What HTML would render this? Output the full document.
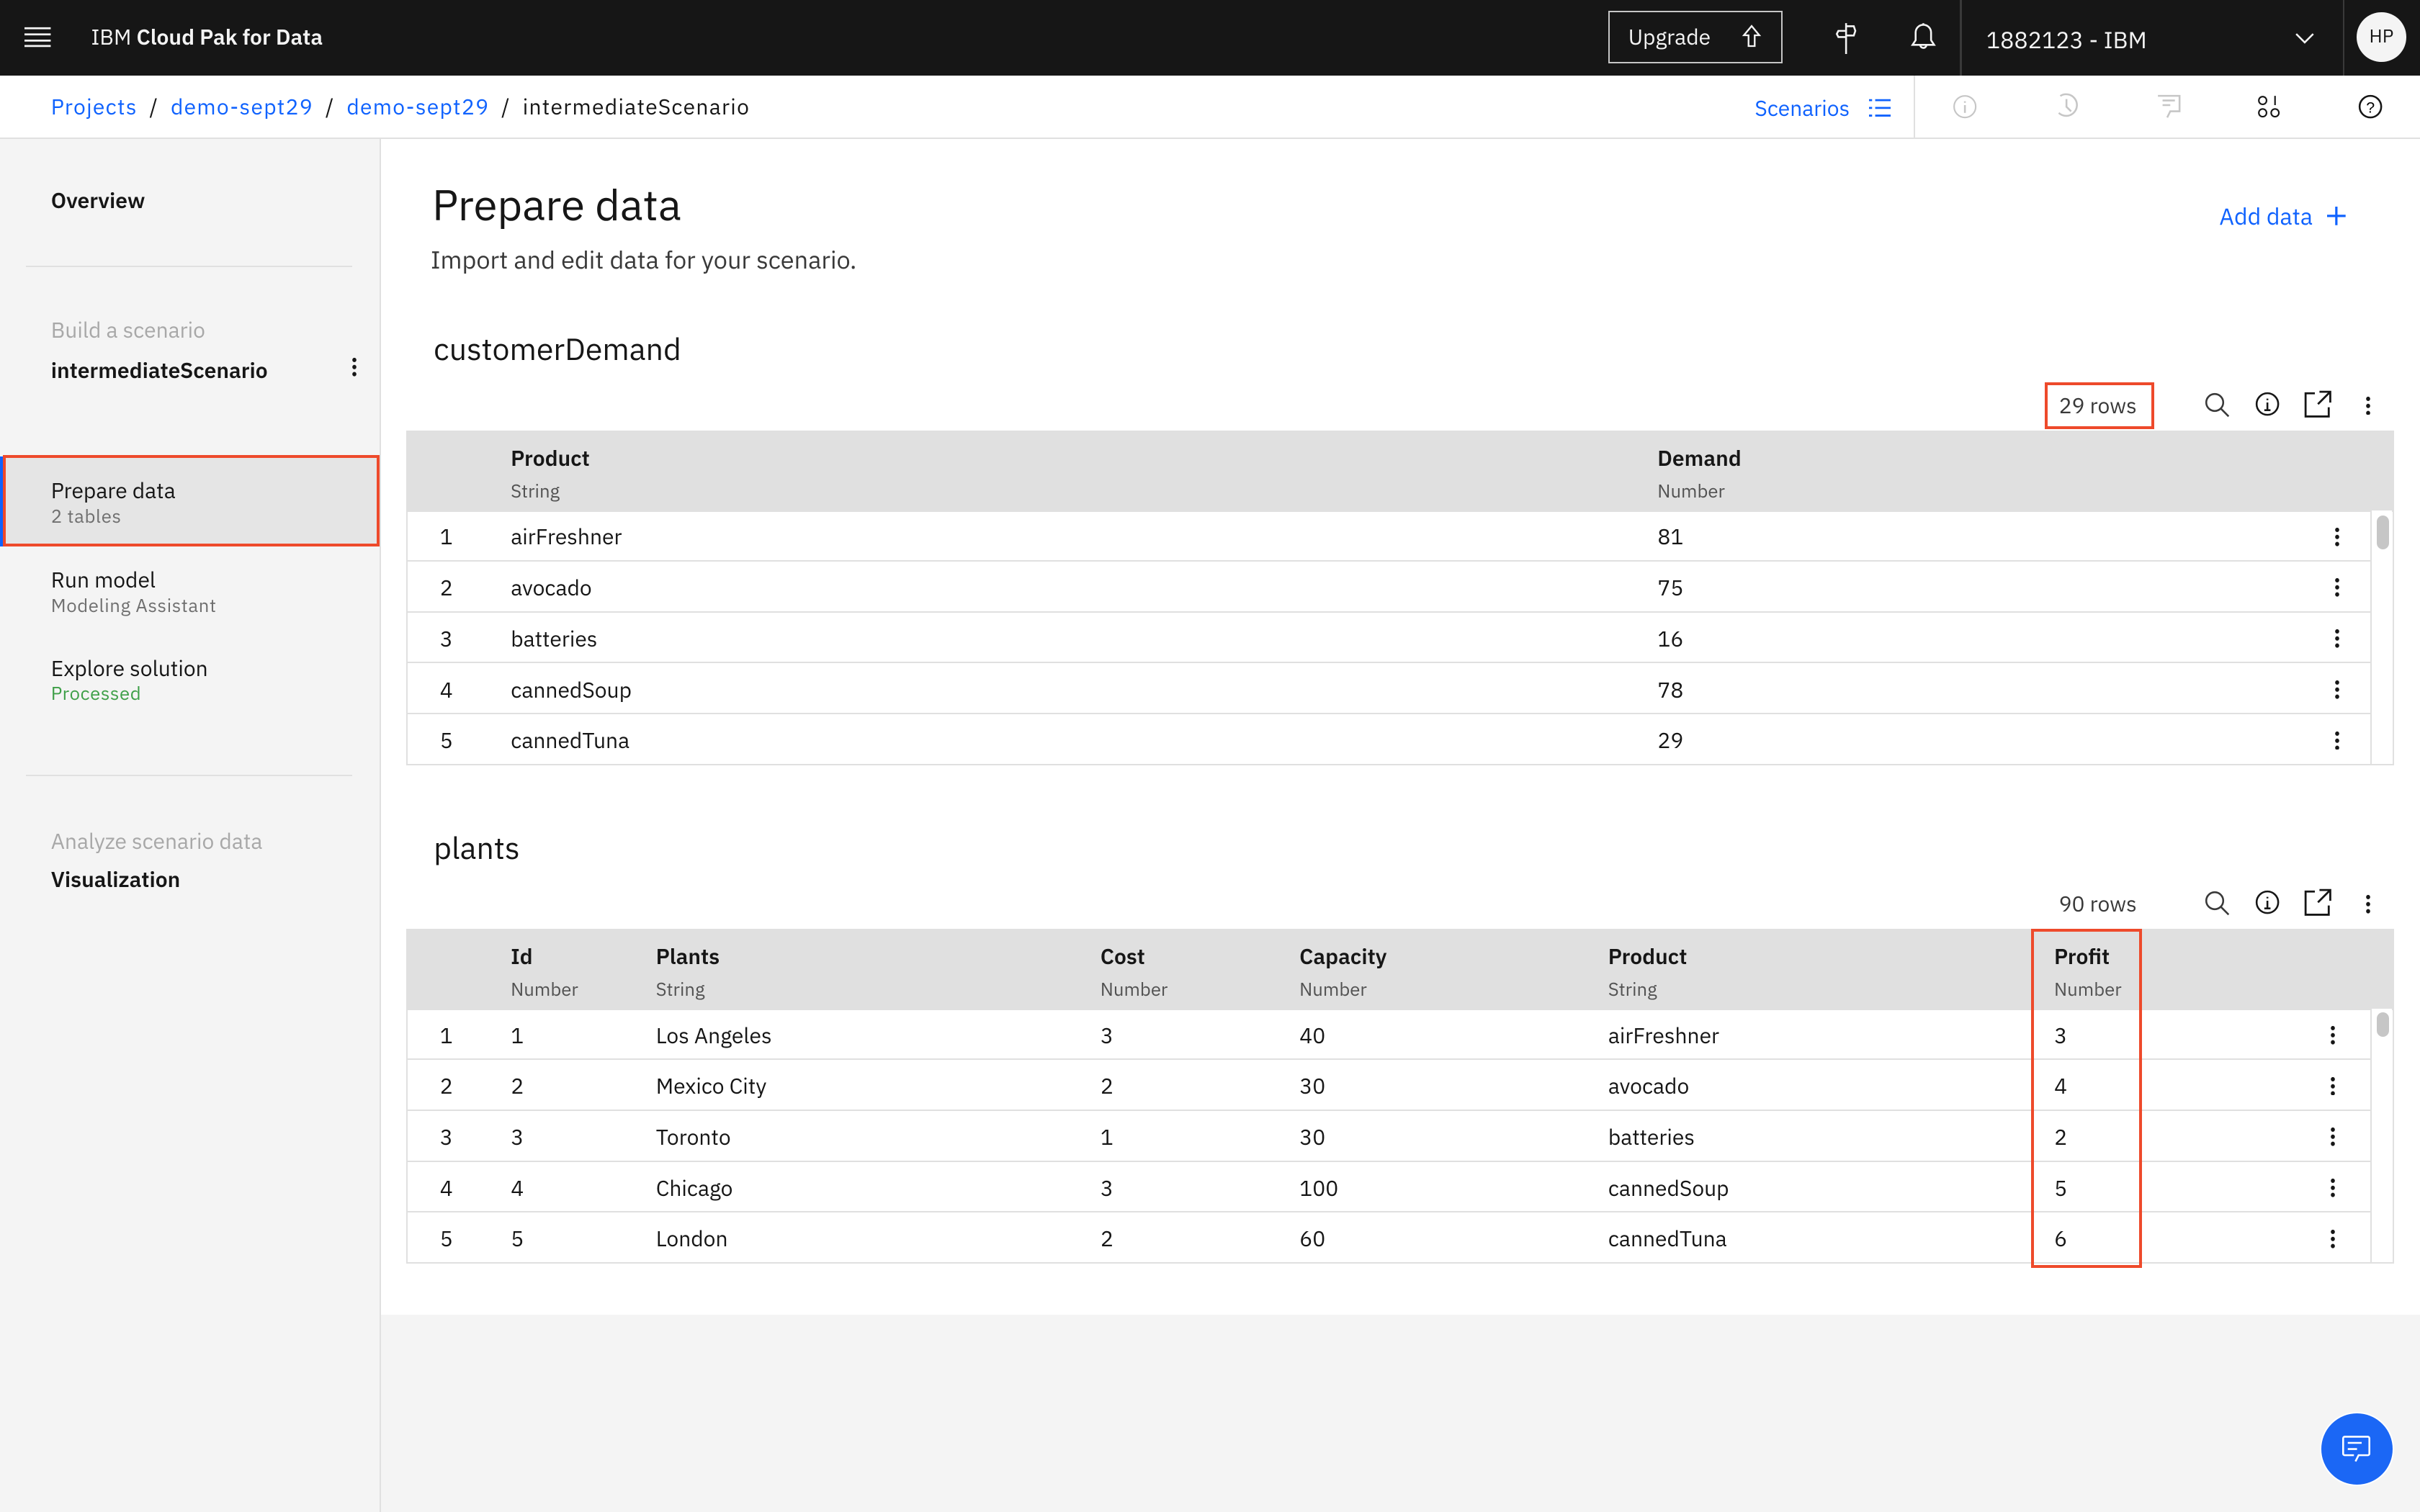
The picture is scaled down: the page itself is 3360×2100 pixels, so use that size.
<!DOCTYPE html>
<html><head><meta charset="utf-8"><style>
*{margin:0;padding:0;box-sizing:border-box}
html,body{width:3360px;height:2100px;overflow:hidden;background:#f4f4f4}
#r{zoom:2.142857;width:1568px;height:980px;position:relative;font-family:"IBM Plex Sans","Liberation Sans",sans-serif;color:#161616;background:#f4f4f4}
.a{position:absolute;white-space:nowrap}
.hdr{left:0;top:0;width:1568px;height:49px;background:#161616}
.w{color:#f4f4f4}
.bc{left:0;top:49px;width:1568px;height:41px;background:#fff;border-bottom:1px solid #e0e0e0}
.blue{color:#0f62fe}
.side{left:0;top:90px;width:247px;height:890px;background:#f4f4f4;border-right:1px solid #e0e0e0}
.main{left:247px;top:90px;width:1321px;height:762px;background:#fff}
.s14{font-size:14px}.s12{font-size:12px;color:#6f6f6f;letter-spacing:.3px}
.b{font-weight:600}
.tbl{left:263px;width:1288px;border:1px solid #e0e0e0;background:#fff}
.th{position:absolute;left:0;top:0;width:100%;height:52px;background:#e0e0e0}
.row{position:absolute;left:0;width:1272px;height:33px;border-bottom:1px solid #e0e0e0;font-size:14px}
.row span,.th span{position:absolute}
.th .n{top:8px;font-size:14px;font-weight:600}
.th .t{top:31px;font-size:12px;color:#525252}
.row span{top:8px}
.kb{position:absolute;width:3px;height:13px;top:10px;background:radial-gradient(circle,#161616 1.3px,transparent 1.5px) 0 0/3px 4.6px repeat-y}
</style></head><body><div id="r">
<div class="a hdr"></div>
<svg class="a" style="left:16px;top:17px" width="17" height="14"><path d="M0 1.5H17M0 5.5H17M0 9.5H17M0 13H17" stroke="#f4f4f4" stroke-width="1.3"/></svg>
<div class="a w s14" style="left:59px;top:15px">IBM <b style="font-weight:600">Cloud Pak for Data</b></div>
<div class="a" style="left:1042px;top:7px;width:113px;height:34px;border:1px solid #c6c6c6"></div>
<div class="a w s14" style="left:1055px;top:15px">Upgrade</div>
<svg class="a" style="left:1128px;top:16px" width="14" height="16"><path d="M7 1L2 7h3v7h4V7h3z" fill="none" stroke="#f4f4f4" stroke-width="1.1"/></svg>
<svg class="a" style="left:1188px;top:14px" width="16" height="22"><path d="M8 1V21M8 3h5l1 3-1 3H8M8 6H3L2 8l1 2h5" fill="none" stroke="#f4f4f4" stroke-width="1.2"/></svg>
<svg class="a" style="left:1236px;top:13px" width="20" height="22"><path d="M3 16h14l-2-3V8a5 5 0 0 0-10 0v5zM8 16a2 2 0 0 0 4 0M10 3V2" fill="none" stroke="#f4f4f4" stroke-width="1.2"/></svg>
<div class="a" style="left:1270px;top:0;width:1px;height:49px;background:#393939"></div>
<div class="a w" style="left:1287px;top:16px;font-size:15px">1882123 - IBM</div>
<svg class="a" style="left:1487px;top:21px" width="13" height="8"><path d="M1 1l5.5 5.5L12 1" fill="none" stroke="#f4f4f4" stroke-width="1.2"/></svg>
<div class="a" style="left:1518px;top:0;width:1px;height:49px;background:#393939"></div>
<div class="a" style="left:1527px;top:8px;width:32px;height:32px;border-radius:50%;background:#f4f4f4;font-size:12px;text-align:center;line-height:32px">HP</div>

<div class="a bc"></div>
<div class="a s14" style="left:33px;top:60px;letter-spacing:.6px"><span class="blue">Projects</span> &nbsp;/&nbsp;&nbsp;<span class="blue">demo-sept29</span>&nbsp; /&nbsp;&nbsp;<span class="blue">demo-sept29</span>&nbsp; /&nbsp;&nbsp;intermediateScenario</div>
<div class="a s14 blue" style="left:1137px;top:61px">Scenarios</div>
<svg class="a" style="left:1211px;top:64px" width="14" height="12"><path d="M0 1h2M4 1h10M0 6h2M4 6h10M0 11h2M4 11h10" stroke="#0f62fe" stroke-width="1.3"/></svg>
<div class="a" style="left:1240px;top:49px;width:1px;height:41px;background:#e0e0e0"></div>
<svg class="a" style="left:1265px;top:61px" width="16" height="16"><circle cx="8" cy="8" r="7" fill="none" stroke="#c6c6c6"/><path d="M8 7v5M8 4.5v1" stroke="#c6c6c6" stroke-width="1.2"/></svg>
<svg class="a" style="left:1331px;top:60px" width="16" height="17"><path d="M4 2A7 7 0 1 1 3 13M8 4v5l3 3" fill="none" stroke="#c6c6c6" stroke-width="1.2"/></svg>
<svg class="a" style="left:1397px;top:61px" width="16" height="17"><path d="M1 1h14v10H9l-2 4M4 4h8M4 7h5" fill="none" stroke="#c6c6c6" stroke-width="1.2"/></svg>
<svg class="a" style="left:1462px;top:61px" width="16" height="16" font-size="8"><circle cx="4" cy="4" r="2.5" fill="none" stroke="#161616"/><path d="M12 1v6" stroke="#161616"/><circle cx="4" cy="12" r="2.5" fill="none" stroke="#161616"/><circle cx="12" cy="12" r="2.5" fill="none" stroke="#161616"/></svg>
<svg class="a" style="left:1528px;top:61px" width="16" height="16"><circle cx="8" cy="8" r="7" fill="none" stroke="#161616" stroke-width="1.2"/><text x="8" y="12" font-size="10" text-anchor="middle" font-family="Liberation Sans">?</text></svg>

<div class="a side"></div>
<div class="a s14 b" style="left:33px;top:121px">Overview</div>
<div class="a" style="left:17px;top:172px;width:211px;height:1px;background:#e0e0e0"></div>
<div class="a s14" style="left:33px;top:205px;color:#a8a8a8">Build a scenario</div>
<div class="a s14 b" style="left:33px;top:231px">intermediateScenario</div>
<div class="a kb" style="left:228px;top:231px"></div>
<div class="a" style="left:0;top:296px;width:3px;height:58px;background:#0f62fe"></div>
<div class="a" style="left:2px;top:295px;width:244px;height:59px;background:#e5e5e5;border:2px solid #ee4a2b"></div>
<div class="a s14" style="left:33px;top:309px">Prepare data</div>
<div class="a s12" style="left:33px;top:327px">2 tables</div>
<div class="a s14" style="left:33px;top:367px">Run model</div>
<div class="a s12" style="left:33px;top:385px">Modeling Assistant</div>
<div class="a s14" style="left:33px;top:424px">Explore solution</div>
<div class="a s12" style="left:33px;top:442px;color:#3e9f48">Processed</div>
<div class="a" style="left:17px;top:502px;width:211px;height:1px;background:#e0e0e0"></div>
<div class="a s14" style="left:33px;top:536px;color:#a8a8a8">Analyze scenario data</div>
<div class="a s14 b" style="left:33px;top:561px">Visualization</div>

<div class="a main"></div>
<div class="a" style="left:280px;top:114px;font-size:28px">Prepare data</div>
<div class="a" style="left:279px;top:158px;font-size:16px;color:#393939">Import and edit data for your scenario.</div>
<div class="a blue" style="left:1438px;top:130px;font-size:15px">Add data</div>
<svg class="a" style="left:1508px;top:134px" width="12" height="12"><path d="M6 0v12M0 6h12" stroke="#0f62fe" stroke-width="1.5"/></svg>

<div class="a" style="left:281px;top:213px;font-size:20px">customerDemand</div>
<div class="a" style="left:1325px;top:248px;width:71px;height:30px;border:2px solid #ee4a2b"></div>
<div class="a s14" style="left:1334px;top:254px;color:#393939">29 rows</div>

<div class="a" style="left:281px;top:536px;font-size:20px">plants</div>
<div class="a s14" style="left:1334px;top:577px;color:#393939">90 rows</div>

<div class="a tbl" style="top:279px;height:217px"><div class="th"><span class="n" style="left:67px">Product</span><span class="t" style="left:67px">String</span><span class="n" style="left:810px">Demand</span><span class="t" style="left:810px">Number</span></div></div>
<div class="a" style="left:1536px;top:331px;width:14px;height:164px;border-left:1px solid #e0e0e0;background:#fff"></div>
<div class="a" style="left:1540px;top:334px;width:8px;height:22px;border-radius:4px;background:#c6c6c6"></div>

<div class="a tbl" style="top:602px;height:217px"><div class="th"><span class="n" style="left:67px">Id</span><span class="t" style="left:67px">Number</span><span class="n" style="left:161px">Plants</span><span class="t" style="left:161px">String</span><span class="n" style="left:449px">Cost</span><span class="t" style="left:449px">Number</span><span class="n" style="left:578px">Capacity</span><span class="t" style="left:578px">Number</span><span class="n" style="left:778px">Product</span><span class="t" style="left:778px">String</span><span class="n" style="left:1067px">Profit</span><span class="t" style="left:1067px">Number</span></div></div>
<div class="a" style="left:1536px;top:654px;width:14px;height:164px;border-left:1px solid #e0e0e0;background:#fff"></div>
<div class="a" style="left:1540px;top:656px;width:8px;height:16px;border-radius:4px;background:#c6c6c6"></div>

<div class="a" style="left:264px;top:331px">
<div class="row" style="top:0"><span style="left:21px">1</span><span style="left:67px">airFreshner</span><span style="left:810px">81</span><i class="kb" style="left:1249px"></i></div>
<div class="row" style="top:33px"><span style="left:21px">2</span><span style="left:67px">avocado</span><span style="left:810px">75</span><i class="kb" style="left:1249px"></i></div>
<div class="row" style="top:66px"><span style="left:21px">3</span><span style="left:67px">batteries</span><span style="left:810px">16</span><i class="kb" style="left:1249px"></i></div>
<div class="row" style="top:99px"><span style="left:21px">4</span><span style="left:67px">cannedSoup</span><span style="left:810px">78</span><i class="kb" style="left:1249px"></i></div>
<div class="row" style="top:132px;border-bottom:none"><span style="left:21px">5</span><span style="left:67px">cannedTuna</span><span style="left:810px">29</span><i class="kb" style="left:1249px"></i></div>
</div>
<div class="a" style="left:264px;top:654px">
<div class="row" style="top:0"><span style="left:21px">1</span><span style="left:67px">1</span><span style="left:161px">Los Angeles</span><span style="left:449px">3</span><span style="left:578px">40</span><span style="left:778px">airFreshner</span><span style="left:1067px">3</span><i class="kb" style="left:1246px"></i></div>
<div class="row" style="top:33px"><span style="left:21px">2</span><span style="left:67px">2</span><span style="left:161px">Mexico City</span><span style="left:449px">2</span><span style="left:578px">30</span><span style="left:778px">avocado</span><span style="left:1067px">4</span><i class="kb" style="left:1246px"></i></div>
<div class="row" style="top:66px"><span style="left:21px">3</span><span style="left:67px">3</span><span style="left:161px">Toronto</span><span style="left:449px">1</span><span style="left:578px">30</span><span style="left:778px">batteries</span><span style="left:1067px">2</span><i class="kb" style="left:1246px"></i></div>
<div class="row" style="top:99px"><span style="left:21px">4</span><span style="left:67px">4</span><span style="left:161px">Chicago</span><span style="left:449px">3</span><span style="left:578px">100</span><span style="left:778px">cannedSoup</span><span style="left:1067px">5</span><i class="kb" style="left:1246px"></i></div>
<div class="row" style="top:132px;border-bottom:none"><span style="left:21px">5</span><span style="left:67px">5</span><span style="left:161px">London</span><span style="left:449px">2</span><span style="left:578px">60</span><span style="left:778px">cannedTuna</span><span style="left:1067px">6</span><i class="kb" style="left:1246px"></i></div>
</div>
<div class="a" style="left:1316px;top:602px;width:72px;height:220px;border:2px solid #ee4a2b"></div>

<svg class="a" style="left:1428px;top:254px" width="17" height="17"><circle cx="7" cy="7" r="5.5" fill="none" stroke="#393939" stroke-width="1.2"/><path d="M11 11l5 5" stroke="#393939" stroke-width="1.2"/></svg>
<svg class="a" style="left:1461px;top:254px" width="16" height="16"><circle cx="8" cy="8" r="7" fill="none" stroke="#161616" stroke-width="1.2"/><path d="M8 7v5M6 12h4M8 4.5v1" stroke="#161616" stroke-width="1.2"/></svg>
<svg class="a" style="left:1493px;top:253px" width="18" height="18"><path d="M7 2H1v15h15v-6M10 1h7v7M17 1l-8 8" fill="none" stroke="#161616" stroke-width="1.3"/></svg>
<div class="a kb" style="left:1533px;top:256px"></div>
<svg class="a" style="left:1428px;top:577px" width="17" height="17"><circle cx="7" cy="7" r="5.5" fill="none" stroke="#393939" stroke-width="1.2"/><path d="M11 11l5 5" stroke="#393939" stroke-width="1.2"/></svg>
<svg class="a" style="left:1461px;top:577px" width="16" height="16"><circle cx="8" cy="8" r="7" fill="none" stroke="#161616" stroke-width="1.2"/><path d="M8 7v5M6 12h4M8 4.5v1" stroke="#161616" stroke-width="1.2"/></svg>
<svg class="a" style="left:1493px;top:576px" width="18" height="18"><path d="M7 2H1v15h15v-6M10 1h7v7M17 1l-8 8" fill="none" stroke="#161616" stroke-width="1.3"/></svg>
<div class="a kb" style="left:1533px;top:579px"></div>

<div class="a" style="left:1503px;top:915px;width:48px;height:48px;border-radius:50%;background:#1b67f5;border:1px solid #fff"></div>
<svg class="a" style="left:1516px;top:928px" width="22" height="22"><path d="M9 15H3a1 1 0 0 1-1-1V4a1 1 0 0 1 1-1h15a1 1 0 0 1 1 1v10a1 1 0 0 1-1 1h-6l-2 4M5 7h9M5 11h6" fill="none" stroke="#fff" stroke-width="1.2"/></svg>
</div></body></html>
